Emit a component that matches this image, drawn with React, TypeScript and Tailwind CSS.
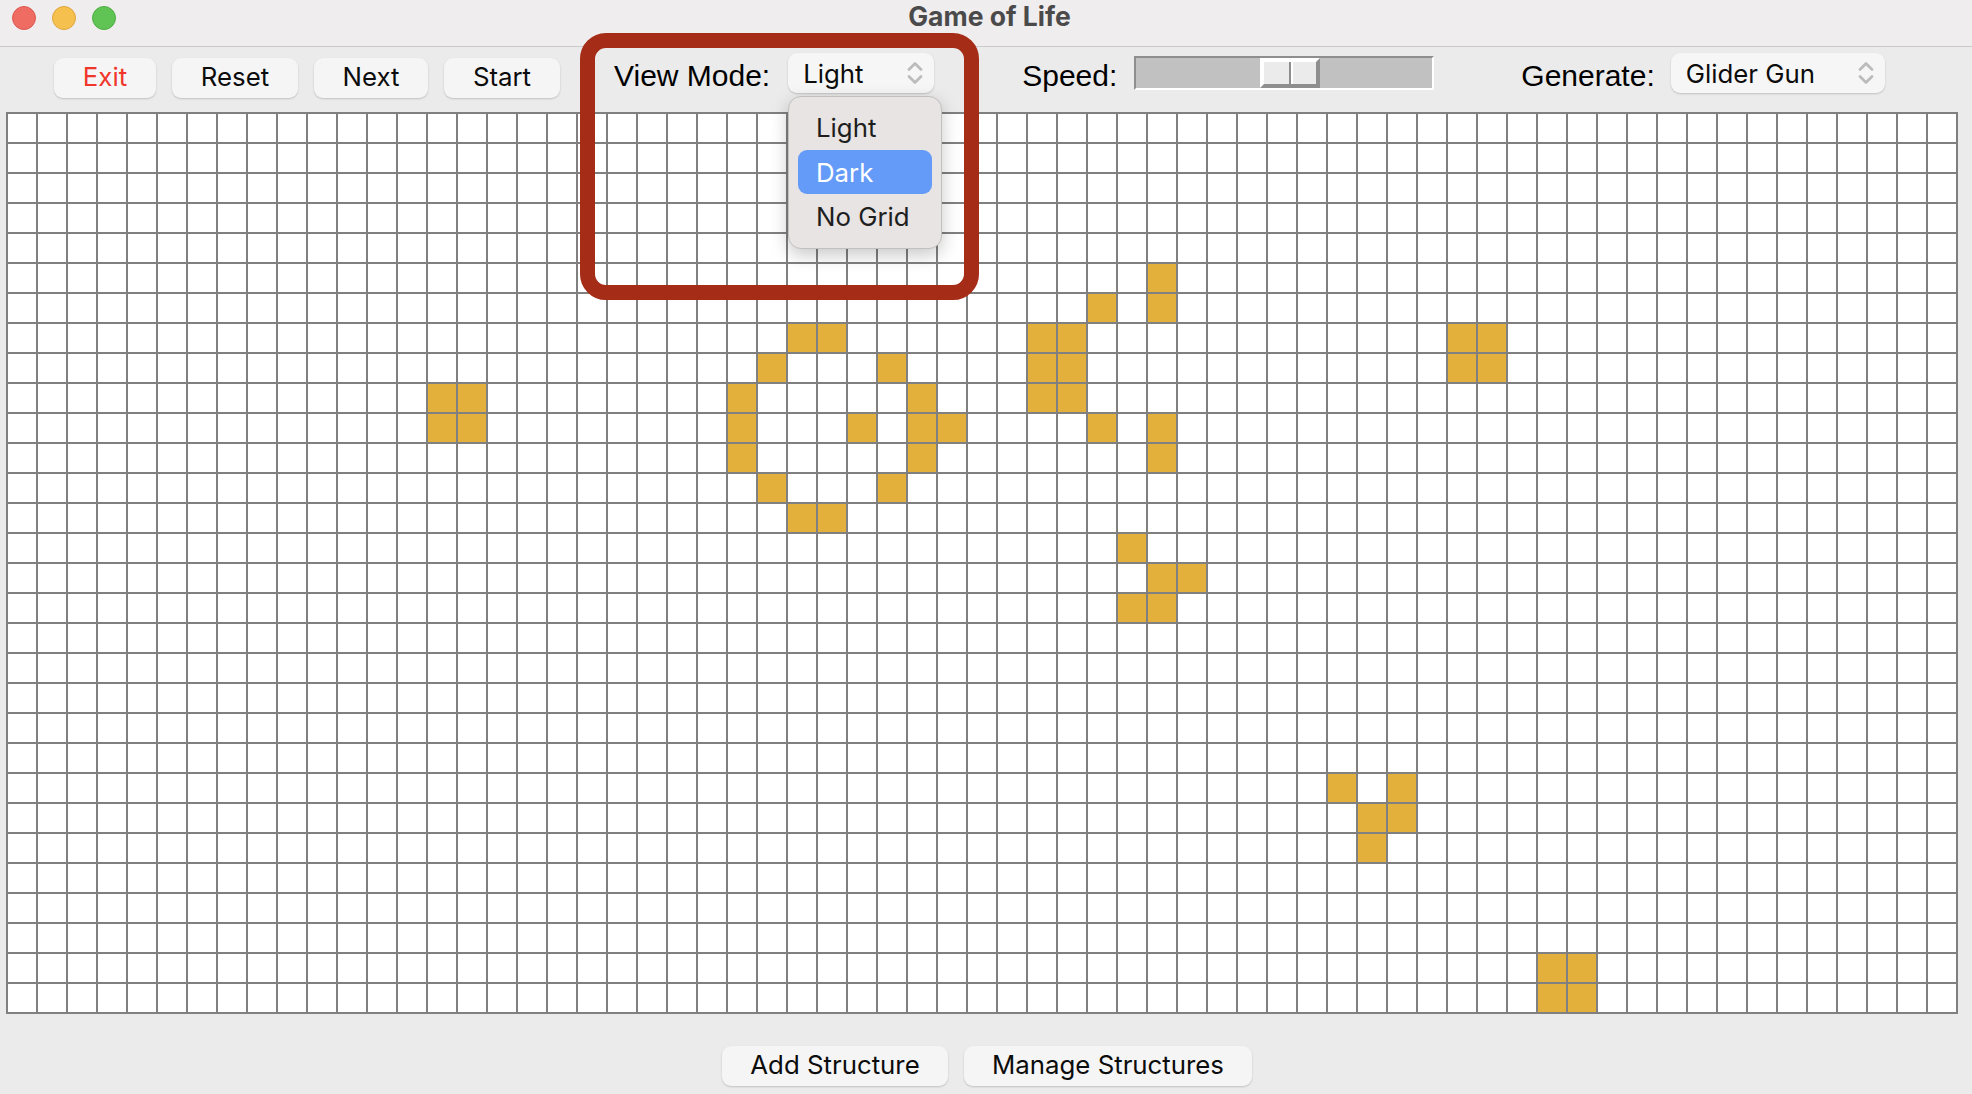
const COLS = 65;
const ROWS = 30;

// live cells as row -> columns
const liveCells: Record<number, number[]> = {
  5: [38],
  6: [36, 38],
  7: [26, 27, 34, 35, 48, 49],
  8: [25, 29, 34, 35, 48, 49],
  9: [14, 15, 24, 30, 34, 35],
  10: [14, 15, 24, 28, 30, 31, 36, 38],
  11: [24, 30, 38],
  12: [25, 29],
  13: [26, 27],
  14: [37],
  15: [38, 39],
  16: [37, 38],
  22: [44, 46],
  23: [45, 46],
  24: [45],
  28: [51, 52],
  29: [51, 52],
};

const Chevrons = () => (
  <svg width="16" height="24" viewBox="0 0 16 24" fill="none" stroke="#bcbcbc" strokeWidth="2.8" strokeLinecap="round" strokeLinejoin="round">
    <path d="M2 8.500 8 2.500l6 6" />
    <path d="M2 15.500 8 21.500l6-6" />
  </svg>
);

const Button = ({ label, width, red }: { label: string; width: string; red?: boolean }) => (
  <button
    className={`h-10 pb-[2px] rounded-[9px] bg-[#f5f5f5] shadow-[0_1px_2px_rgba(0,0,0,0.18)] text-[25.800px] font-['Inter',sans-serif] ${width} ${red ? "text-[#f0352b]" : "text-[#0c0c0c]"}`}
  >
    {label}
  </button>
);

const Select = ({ value, width }: { value: string; width: string }) => (
  <div className={`h-10 rounded-[9px] bg-[#f6f6f6] shadow-[0_1px_2px_rgba(0,0,0,0.18)] flex items-center justify-between pl-[15px] pr-[11px] text-[25.800px] text-[#0c0c0c] font-['Inter',sans-serif] ${width}`}>
    <span className="pt-[3px]">{value}</span>
    <Chevrons />
  </div>
);

const Label = ({ text }: { text: string }) => (
  <span className="pt-[6px] text-[30px] leading-none text-black font-['Liberation_Sans',sans-serif]">{text}</span>
);

const App = () => {
  return (
    <div className="relative w-[1972px] h-[1094px] overflow-hidden bg-[#ebebeb]">
      {/* title bar */}
      <div className="relative h-[47px] bg-[#efedee] border-b border-[#cacaca] flex items-center justify-center">
        <div className="absolute left-3 top-[6px] flex gap-4">
          <div className="w-6 h-6 rounded-full bg-[#ef6c62] border border-[#dc5a52]" />
          <div className="w-6 h-6 rounded-full bg-[#f6c04e] border border-[#e0a63c]" />
          <div className="w-6 h-6 rounded-full bg-[#5fc453] border border-[#4fae44]" />
        </div>
        <span className="text-[26.500px] font-bold leading-none text-[#4b4a4b] font-['Inter',sans-serif] -mt-[13px] ml-[7px]">Game of Life</span>
      </div>

      {/* toolbar */}
      <div className="h-[65px] flex items-start pl-[54px]">
        <div className="flex gap-4 mt-[11px]">
          <Button label="Exit" width="w-[102px]" red />
          <Button label="Reset" width="w-[126px]" />
          <Button label="Next" width="w-[114px]" />
          <Button label="Start" width="w-[116px]" />
        </div>
        <div className="flex items-center gap-[18px] ml-[54px] mt-[6px]">
          <Label text="View Mode:" />
          <Select value="Light" width="w-[146px]" />
        </div>
        <div className="flex items-center gap-[17px] ml-[88px] mt-[8px]">
          <Label text="Speed:" />
          {/* speed slider */}
          <div className="w-[300px] h-[34px] bg-[#c1c1c1] border-t-2 border-l-2 border-t-[#8e8e8e] border-l-[#8e8e8e] border-b-2 border-r-2 border-b-white border-r-white flex pl-[124px]">
            <div className="w-[60px] h-[30px] flex bg-[#ebebeb] border-4 border-t-white border-l-white border-b-[#8e8e8e] border-r-[#8e8e8e]">
              <div className="w-[27px] border-r-2 border-r-[#8e8e8e]" />
              <div className="flex-1 border-l-2 border-l-white" />
            </div>
          </div>
        </div>
        <div className="flex items-center gap-[16px] ml-[87px] mt-[6px]">
          <Label text="Generate:" />
          <Select value="Glider Gun" width="w-[214px]" />
        </div>
      </div>

      {/* board */}
      <div className="ml-[6px] w-[1952px] grid grid-cols-[repeat(65,28px)] auto-rows-[28px] gap-[2px] p-[2px] bg-[#808080]">
        {Array.from({ length: ROWS }).flatMap((_, r) =>
          Array.from({ length: COLS }).map((_, c) => (
            <div key={`${r}-${c}`} className={liveCells[r]?.includes(c) ? "bg-[#e3b03c]" : "bg-white"} />
          ))
        )}
      </div>

      {/* bottom buttons */}
      <div className="flex justify-start gap-4 pl-[722px] mt-8">
        <Button label="Add Structure" width="w-[226px]" />
        <Button label="Manage Structures" width="w-[288px]" />
      </div>

      {/* dropdown list */}
      <div className="absolute left-[788px] top-[96px] w-[154px] h-[153px] rounded-[13px] bg-[#e7e4e3] border border-[#c2c0bf] shadow-[0_6px_18px_rgba(0,0,0,0.22)] px-[9px] pt-[9px] text-[25.800px] font-['Inter',sans-serif] text-[#1e1e1e]">
        <div className="h-[44px] flex items-center pl-[18px] pt-[1px]">Light</div>
        <div className="h-[44px] flex items-center pl-[18px] pt-[2px] rounded-[9px] bg-[#659bf8] text-white">Dark</div>
        <div className="h-[44px] flex items-center pl-[18px] pt-[2px]">No Grid</div>
      </div>

      {/* red annotation frame */}
      <div className="absolute left-[580px] top-[33px] w-[399px] h-[267px] rounded-[26px] border-[15px] border-[#a52c16]" />
    </div>
  );
};

export default App;
